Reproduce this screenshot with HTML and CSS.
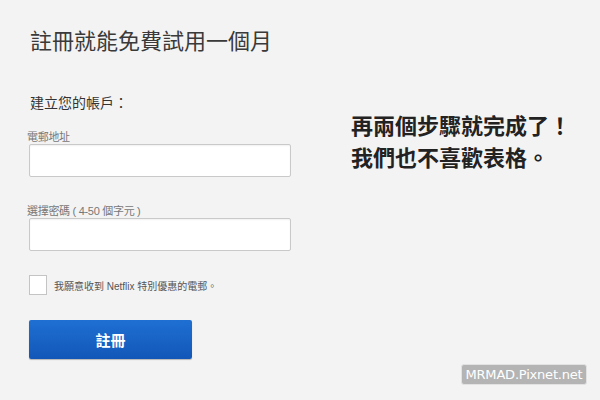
FILE: index.html
```html
<!DOCTYPE html>
<html lang="zh-Hant">
<head>
  <meta charset="UTF-8">
  <title>註冊就能免費試用一個月</title>
  <link rel="stylesheet" href="styles.css">
</head>
<body>
  <div class="page">
    <div class="signup">
      <h1 class="title">註冊就能免費試用一個月</h1>
      <h2 class="subtitle">建立您的帳戶：</h2>

      <label class="field-label" for="email">電郵地址</label>
      <input class="field" id="email" type="text">

      <label class="field-label field-label-gap" for="password">選擇密碼 ( 4-50 個字元 )</label>
      <input class="field" id="password" type="password">

      <div class="offers">
        <span class="checkbox"></span>
        <span>我願意收到 Netflix 特別優惠的電郵。</span>
      </div>

      <button class="submit">註冊</button>
    </div>

    <div class="note">
      <p>再兩個步驟就完成了！</p>
      <p>我們也不喜歡表格。</p>
    </div>
  </div>

  <div class="watermark">MRMAD.Pixnet.net</div>
</body>
</html>
```

FILE: styles.css
```css
body {
  margin: 0;
  padding: 0;
  width: 600px;
  height: 400px;
  overflow: hidden;
  background-color: #f3f3f3;
  font-family: 'Liberation Sans', 'Noto Sans CJK TC', sans-serif;
  color: #333;
}

.page {
  display: flex;
  align-items: flex-start;
  padding: 27px 0 0 29px;
}

.signup {
  display: flex;
  flex-direction: column;
  width: 262px;
}

.title {
  margin: 0 0 0 1px;
  font-size: 22px;
  line-height: 30px;
  font-weight: normal;
  color: #3a3a3a;
  white-space: nowrap;
}

.subtitle {
  margin: 36px 0 0 1px;
  font-size: 14px;
  line-height: 20px;
  font-weight: normal;
  color: #333;
}

.field-label {
  margin-top: 18px;
  margin-left: -2px;
  font-size: 11px;
  line-height: 13px;
  color: #777;
  letter-spacing: -0.3px;
}

.field-label-gap {
  margin-top: 28px;
}

.field {
  box-sizing: border-box;
  width: 262px;
  height: 33px;
  margin: 0;
  border: 1px solid #c9c9c9;
  border-radius: 2px;
  background-color: #fff;
  box-shadow: inset 0 1px 2px rgba(0, 0, 0, 0.06);
  outline: none;
}

/* promo opt-in row */
.offers {
  display: flex;
  align-items: center;
  margin-top: 24px;
  font-size: 10px;
  color: #555;
  white-space: nowrap;
}

.checkbox {
  box-sizing: border-box;
  width: 18px;
  height: 20px;
  margin-right: 7px;
  border: 1px solid #c4c4c4;
  background-color: #fff;
}

.submit {
  width: 163px;
  height: 39px;
  margin-top: 25px;
  padding: 0;
  border: none;
  border-radius: 2px;
  background: linear-gradient(#1f6fd3, #1257b8);
  box-shadow: 0 1px 1px rgba(0, 0, 0, 0.25);
  color: #fff;
  font-family: 'Liberation Sans', 'Noto Sans CJK TC', sans-serif;
  font-size: 15px;
  font-weight: bold;
  cursor: pointer;
}

.note {
  margin: 84px 0 0 60px;
  font-size: 22px;
  line-height: 32px;
  font-weight: bold;
  color: #222;
}

.note p {
  margin: 0;
  white-space: nowrap;
}

.watermark {
  position: absolute;
  right: 13px;
  bottom: 15px;
  box-sizing: border-box;
  width: 126px;
  height: 21px;
  border: 1px solid #e2e2e2;
  border-radius: 3px;
  background-color: #b4b4b4;
  color: #fff;
  font-family: 'DejaVu Sans', sans-serif;
  font-size: 13px;
  line-height: 19px;
  letter-spacing: -0.2px;
  text-align: center;
}
```
